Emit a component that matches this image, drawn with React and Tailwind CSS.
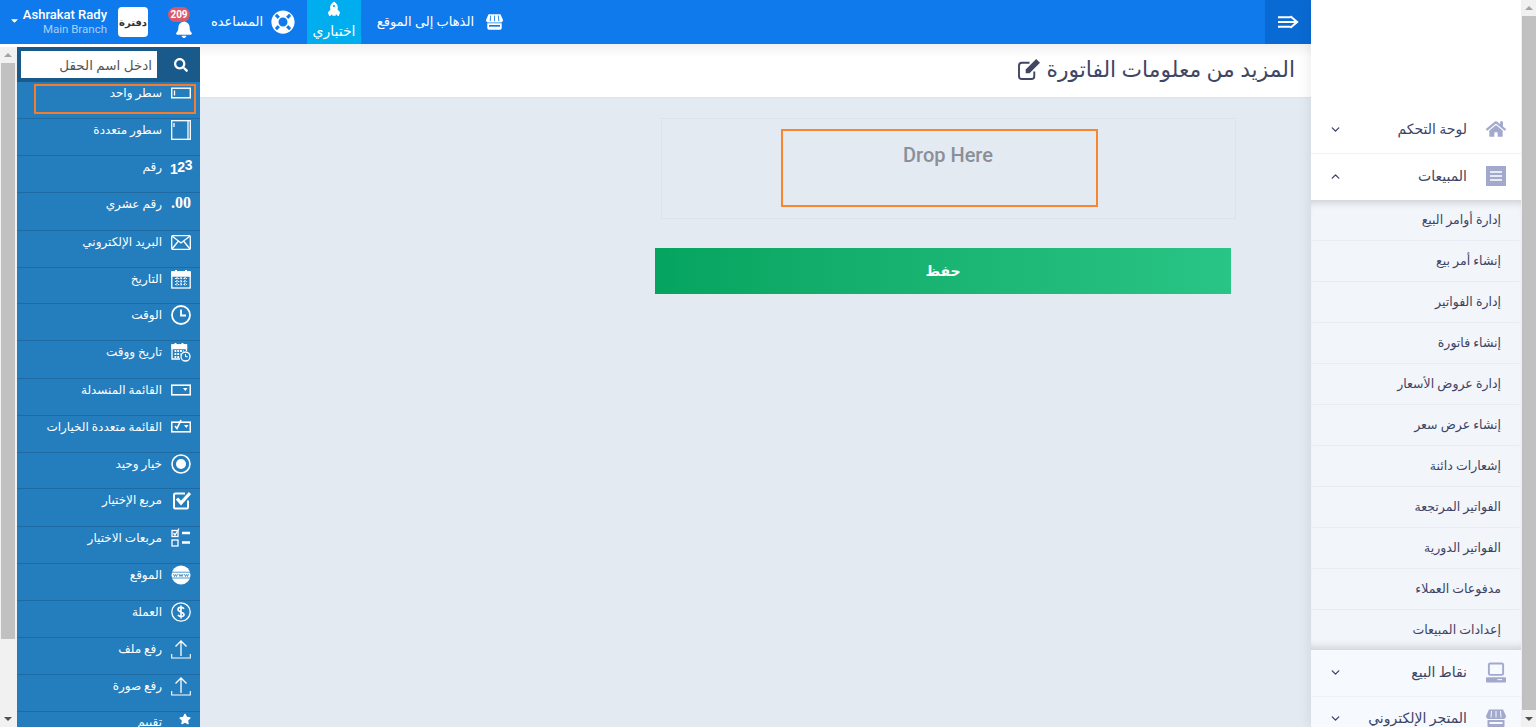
import React from "react";
import { FaHome, FaSearch, FaCaretDown, FaBell, FaRocket, FaLifeRing, FaStar } from "react-icons/fa";
import { ChevronDown, ChevronUp } from "lucide-react";

const S = ({ children }) => (
  <svg viewBox="0 0 20 20" className="w-5 h-5 text-white" fill="none" stroke="currentColor" strokeWidth="1.3">
    {children}
  </svg>
);

const StoreIcon = ({ className, cut }) => (
  <svg viewBox="0 0 20 18" className={className}>
    <path d="M3 0h14l3 6.500c0 1.700-1.200 3-2.600 3H2.600C1.200 9.500 0 8.200 0 6.500z" fill="currentColor" />
    <path d="M5.500 1.500L5 8M10 1.500V8M14.500 1.500L15 8" stroke={cut} strokeWidth="1" />
    <path d="M1.500 10.500h17V16a2 2 0 0 1-2 2h-13a2 2 0 0 1-2-2z" fill="currentColor" />
    <path d="M3.500 12.500h13v2h-13z" fill={cut} />
  </svg>
);

const icons = {
  line: (
    <S>
      <rect x="0.7" y="5.2" width="18.6" height="9.6" strokeWidth="1.4" />
      <path d="M3.5 7.5v5" />
    </S>
  ),
  text: (
    <S>
      <rect x="0.7" y="0.7" width="18.6" height="18.6" />
      <path d="M17 1v18M3 3v4" />
    </S>
  ),
  num: (
    <div dir="ltr" className="flex items-start text-white font-['Liberation_Sans',sans-serif] font-bold text-[14px] leading-none tracking-[-0.5px]">
      <span className="mt-[4px]">1</span>
      <span className="mt-[2px]">2</span>
      <span>3</span>
    </div>
  ),
  mail: (
    <S>
      <rect x="0.7" y="3.7" width="18.6" height="13.6" rx="1" />
      <path d="M1 4l9 7 9-7M1 17l6.500-8M19 17l-6.500-8" />
    </S>
  ),
  date: (
    <S>
      <rect x="0.8" y="3" width="18.4" height="16" />
      <path d="M1 3h18v4H1z" fill="currentColor" />
      <path d="M5 1v3M15 1v3" strokeWidth="2" />
      <path d="M4 9.500h12M4 12.500h12M4 15.500h12M6 8v9M10 8v9M14 8v9" strokeWidth="1.200" strokeDasharray="1.500 1.300" />
    </S>
  ),
  clock: (
    <S>
      <circle cx="10" cy="10" r="9" strokeWidth="1.800" />
      <path d="M10 4.500V10.500H15" strokeWidth="1.800" />
    </S>
  ),
  datetime: (
    <S>
      <path d="M15.500 9V3H1v14h8" strokeWidth="1.300" />
      <path d="M1 3h14.500v3.500H1z" fill="currentColor" />
      <path d="M4.500 1v3M11.500 1v3" strokeWidth="1.800" />
      <path d="M3.500 9h9M3.500 12h6M3.500 15h5" strokeWidth="1.800" strokeDasharray="1.800 1" />
      <circle cx="14.500" cy="14.500" r="4.500" />
      <path d="M14.500 12v2.700h2.300" strokeWidth="1" />
    </S>
  ),
  select: (
    <S>
      <rect x="0.7" y="5.2" width="18.6" height="9.6" strokeWidth="1.600" />
      <path d="M12 8h4.500l-2.200 3z" fill="currentColor" stroke="none" />
    </S>
  ),
  multi: (
    <S>
      <rect x="0.7" y="5.2" width="18.6" height="9.6" strokeWidth="1.600" />
      <path d="M4 9l2 2.500L10 3" strokeWidth="1.600" />
      <path d="M13 8h4.500l-2.200 3z" fill="currentColor" stroke="none" />
    </S>
  ),
  radio: (
    <S>
      <circle cx="10" cy="10" r="9" strokeWidth="1.600" />
      <circle cx="10" cy="10" r="5" fill="currentColor" stroke="none" />
    </S>
  ),
  check: (
    <S>
      <path d="M15 10.500V17a1.500 1.500 0 0 1-1.500 1.500h-11A1.500 1.500 0 0 1 1 17V5a1.500 1.500 0 0 1 1.500-1.500H12" strokeWidth="2" transform="translate(2 0)" />
      <path d="M6 8.500l4 4.500L19 3" strokeWidth="3.200" />
    </S>
  ),
  checks: (
    <S>
      <rect x="1" y="2.500" width="6" height="6" />
      <rect x="1" y="12" width="6" height="6" />
      <path d="M2.500 5l1.500 2L8 .5" />
      <path d="M11 5h8M11 14.500h8" strokeWidth="2.400" />
    </S>
  ),
  web: (
    <S>
      <circle cx="10" cy="10" r="9.500" fill="currentColor" stroke="none" />
      <path d="M0 7.200h20M0 13h20" stroke="#247dbd" strokeWidth="0.8" />
      <path d="M2.500 9l1 2.500 1-2 1 2 1-2.500M8 9l1 2.500 1-2 1 2 1-2.500M13.500 9l1 2.500 1-2 1 2 1-2.500" stroke="#247dbd" strokeWidth="0.8" />
    </S>
  ),
  money: (
    <S>
      <circle cx="10" cy="10" r="9.200" strokeWidth="1.300" />
      <path d="M13 6.800c-1-2-6-2-6 .6 0 2.800 6 2.200 6 5 0 2.700-5 2.600-6 .5M10 3.500v13" strokeWidth="1.600" />
    </S>
  ),
  upload: (
    <S>
      <path d="M10 17V2M4.500 7.500L10 2l5.500 5.500" strokeWidth="1.300" />
      <path d="M.7 15v4h18.600v-4" strokeWidth="1.100" />
    </S>
  ),
};

const fields = [
  { t: "سطر واحد", i: "line" },
  { t: "سطور متعددة", i: "text" },
  { t: "رقم", i: "num" },
  { t: "رقم عشري", i: "dec", h: "h-[38px]" },
  { t: "البريد الإلكتروني", i: "mail" },
  { t: "التاريخ", i: "date", h: "h-[36px]" },
  { t: "الوقت", i: "clock" },
  { t: "تاريخ ووقت", i: "datetime", h: "h-[38px]" },
  { t: "القائمة المنسدلة", i: "select" },
  { t: "القائمة متعددة الخيارات", i: "multi" },
  { t: "خيار وحيد", i: "radio", h: "h-[36px]" },
  { t: "مربع الإختيار", i: "check", h: "h-[38px]" },
  { t: "مربعات الاختيار", i: "checks" },
  { t: "الموقع", i: "web" },
  { t: "العملة", i: "money" },
  { t: "رفع ملف", i: "upload" },
  { t: "رفع صورة", i: "upload" },
];

const subItems = [
  "إدارة أوامر البيع",
  "إنشاء أمر بيع",
  "إدارة الفواتير",
  "إنشاء فاتورة",
  "إدارة عروض الأسعار",
  "إنشاء عرض سعر",
  "إشعارات دائنة",
  "الفواتير المرتجعة",
  "الفواتير الدورية",
  "مدفوعات العملاء",
  "إعدادات المبيعات",
];

function Scrollbar({ thumb, className }) {
  return (
    <div className={"bg-[#f1f1f1] flex flex-col items-center shrink-0 " + className}>
      <div className="h-4 w-full flex items-center justify-center shrink-0">
        <div className="w-0 h-0 border-x-[4px] border-x-transparent border-b-[4px] border-b-[#a3a3a3]" />
      </div>
      <div className={"bg-[#c1c1c1] w-[14px] shrink-0 " + thumb} />
      <div className="flex-1" />
      <div className="h-4 w-full flex items-center justify-center shrink-0">
        <div className="w-0 h-0 border-x-[4px] border-x-transparent border-t-[4px] border-t-[#505050]" />
      </div>
    </div>
  );
}

function TopBar() {
  return (
    <div className="h-11 bg-[#0e7aec] flex items-center text-white shrink-0">
      <FaCaretDown className="ml-[9px] w-[11px] h-[11px] mb-[3px]" />
      <div className="ml-[2px] w-[85px] text-right">
        <div className="text-[13px] leading-[15px] font-medium whitespace-nowrap">Ashrakat Rady</div>
        <div className="text-[11.5px] leading-[15px] text-[#a9cff7] whitespace-nowrap">Main Branch</div>
      </div>
      <div className="ml-[11px] w-[30px] h-[30px] rounded bg-white flex items-center justify-center text-[10px] font-bold text-[#333]" dir="rtl">
        دفترة
      </div>
      <div className="relative ml-[27px] w-[18px] h-[30px] flex items-end">
        <FaBell className="w-[18px] h-[18px] mb-[-1px]" />
        <span className="absolute left-[-7px] top-[0px] h-[15px] w-[22px] rounded-full bg-[#d9596b] text-[10px] leading-[15px] font-bold text-center">
          209
        </span>
      </div>
      <span className="ml-[21px] text-[13px] whitespace-nowrap w-[49px] text-right" dir="rtl">المساعده</span>
      <FaLifeRing className="ml-[8px] w-6 h-6" />
      <div className="ml-[12px] w-[54px] h-11 bg-[#00adef] flex flex-col items-center pt-[2px]">
        <FaRocket className="w-[14px] h-[14px] mt-[2px] -rotate-45" />
        <span className="text-[14px] leading-[24px] mt-[1px] whitespace-nowrap" dir="rtl">اختباري</span>
      </div>
      <span className="ml-[15px] w-[98px] text-[13px] text-right whitespace-nowrap" dir="rtl">الذهاب إلى الموقع</span>
      <StoreIcon cut="#0e7aec" className="ml-[12px] w-[17px] h-[16px]" />
      <div className="ml-auto w-[46px] h-11 bg-[#0a6ad3] flex items-center justify-center">
        <svg viewBox="0 0 22 14" className="w-[21px] h-[14px]" fill="none" stroke="white" strokeWidth="2.200">
          <path d="M0 2h13M0 7h19M0 12h13M13 1l7 6-7 6" />
        </svg>
      </div>
    </div>
  );
}

function FieldsPanel() {
  return (
    <div className="relative w-[183px] shrink-0 bg-[#247dbd] overflow-hidden">
      <div className="h-[35px] bg-[#1a5a8a] flex items-center">
        <input
          dir="rtl"
          readOnly
          placeholder="ادخل اسم الحقل"
          className="ml-[4px] w-[136px] h-[27px] bg-white px-[5px] text-[13.5px] outline-none placeholder:text-[#555]"
        />
        <FaSearch className="ml-[17px] w-[14px] h-[14px] text-white" />
      </div>
      {fields.map((f) => (
        <div
          key={f.t}
          dir="rtl"
          className={"flex items-start pr-[9px] pt-[1px] gap-[9px] border-b border-[#1e6aa2] " + (f.h || "h-[37px]")}
        >
          <div className="w-5 h-5 flex items-center justify-center shrink-0">
            {f.i === "dec" ? (
              <span dir="ltr" className="font-['Liberation_Serif',serif] font-bold text-[16px] text-white leading-none -mt-[2px]">.00</span>
            ) : (
              icons[f.i]
            )}
          </div>
          <span className="text-[12px] leading-5 text-white whitespace-nowrap">{f.t}</span>
        </div>
      ))}
      <div dir="rtl" className="flex items-start pr-[9px] gap-[9px]">
        <div className="w-5 flex justify-start pt-[1px]">
          <FaStar className="w-[12px] h-[12px] text-white" />
        </div>
        <span className="text-[12px] leading-5 text-white">تقييم</span>
      </div>
      {/* highlighted drag target */}
      <div className="absolute left-[17px] top-[37px] w-[162px] h-[30px] border-2 border-[#f47d30]" />
    </div>
  );
}

function Content() {
  return (
    <div className="flex-1 -mt-[3px] bg-[#e4eaf2] flex flex-col">
      <div dir="rtl" className="h-[54px] border-b border-[#dde3ea] flex items-center pr-4 gap-[6px] text-[#3f4763] bg-gradient-to-b from-[#f2f2f2] via-white via-[25%] to-white">
        <span className="text-[21.8px] leading-none pb-[1px]">المزيد من معلومات الفاتورة</span>
        <svg viewBox="0 0 24 22" className="w-[23px] h-[21px] mb-[3px]" fill="none" stroke="currentColor" strokeWidth="2">
          <path d="M17 13v5a3 3 0 0 1-3 3H4a3 3 0 0 1-3-3V7a3 3 0 0 1 3-3h8" strokeWidth="2" />
          <path d="M8 11L19 0l4 4-11 11H8z" fill="currentColor" stroke="none" />
        </svg>
      </div>
      <div className="pl-[455px] pt-[20px]">
        <div className="ml-[6px] w-[575px] h-[101px] border border-dotted border-[#d6dce4] pt-[10px] pl-[119px]">
          <div className="w-[317px] h-[78px] border-2 border-[#fa8531] text-center pt-[11px] pl-[17px] text-[20px] leading-[26px] font-medium text-[#8b8f98]">
            Drop Here
          </div>
        </div>
        <button className="mt-[29px] w-[576px] h-[46px] bg-gradient-to-r from-[#04a45f] to-[#29c586] text-white font-bold text-[14px]" dir="rtl">
          حفظ
        </button>
      </div>
    </div>
  );
}

function MainItem({ icon, label, up, className }) {
  return (
    <div dir="rtl" className={"flex items-center pr-[15px] pb-[2px] " + className}>
      <div className="w-5 flex justify-center text-[#a3a8cd] shrink-0">{icon}</div>
      <span className="mr-[19px] text-[14px] font-medium text-[#3d4465] whitespace-nowrap">{label}</span>
      <div className="mr-auto ml-[18px] text-[#3d4465]">
        {up ? <ChevronUp className="w-[13px] h-[13px]" strokeWidth={2.5} /> : <ChevronDown className="w-[13px] h-[13px]" strokeWidth={2.5} />}
      </div>
    </div>
  );
}

function Sidebar() {
  return (
    <div className="w-[210px] shrink-0 bg-white flex flex-col shadow-[-4px_0_10px_rgba(0,0,0,0.06)] z-10">
      <div className="h-[107px] shrink-0" />
      <MainItem icon={<FaHome className="w-5 h-5" />} label="لوحة التحكم" className="h-[47px] border-b border-[#eef1f5] shrink-0" />
      <MainItem
        up
        icon={
          <svg viewBox="0 0 20 20" className="w-5 h-5">
            <path d="M0 0h20v20H0z" fill="currentColor" />
            <path d="M4 6h12M4 10h12M4 14h12" stroke="white" strokeWidth="1.600" />
          </svg>
        }
        label="المبيعات"
        className="h-[46px] shrink-0"
      />
      <div className="bg-[#f2f5fa] shadow-[inset_0_8px_8px_-6px_rgba(0,0,0,0.18),inset_0_-10px_10px_-8px_rgba(0,0,0,0.18)] shrink-0">
        {subItems.map((s, i) => (
          <div
            key={s}
            dir="rtl"
            className={"flex items-center pr-[20px] text-[12.5px] text-[#3d4465] " + (i < subItems.length - 1 ? "h-[41px] border-b border-[#e9edf3]" : "h-[40px]")}
          >
            {s}
          </div>
        ))}
      </div>
      <div className="flex-1 bg-[#f6f9fd]">
        <MainItem
          icon={
            <svg viewBox="0 0 21 21" className="w-[21px] h-[21px]" fill="none" stroke="currentColor">
              <rect x="3" y="1" width="15" height="12" rx="1.500" strokeWidth="2" />
              <path d="M1 15.500h19a1 1 0 0 1 1 1V20a1 1 0 0 1-1 1H1a1 1 0 0 1-1-1v-3.500a1 1 0 0 1 1-1z" fill="currentColor" stroke="none" />
              <path d="M12 18h5" stroke="white" strokeWidth="1" />
            </svg>
          }
          label="نقاط البيع"
          className="h-[47px] border-b border-[#eef1f5]"
        />
        <MainItem icon={<StoreIcon cut="#f6f9fd" className="w-[20px] h-[19px]" />} label="المتجر الإلكتروني" className="h-[46px] pb-[3px]" />
      </div>
    </div>
  );
}

export default function App() {
  return (
    <div className="w-[1536px] h-[727px] flex overflow-hidden bg-white font-['Roboto','Noto_Sans','DejaVu_Sans',sans-serif]">
      <div className="w-[1311px] flex flex-col shrink-0">
        <TopBar />
        <div className="flex-1 flex pt-[3px] min-h-0">
          <Scrollbar className="w-[17px] pr-[1px]" thumb="h-[576px]" />
          <FieldsPanel />
          <Content />
        </div>
      </div>
      <Sidebar />
      <Scrollbar className="w-[15px]" thumb="h-[694px]" />
    </div>
  );
}
